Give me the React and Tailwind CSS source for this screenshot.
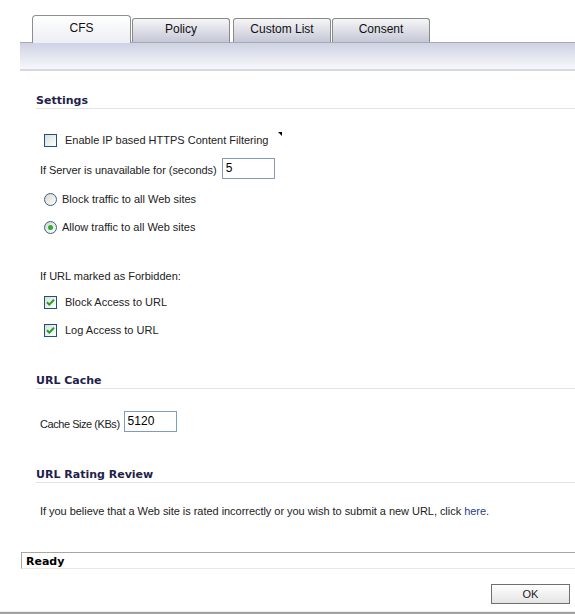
import React from "react";

const body = { fontFamily: '"Liberation Sans", Arial, sans-serif' };
const bold = { fontFamily: '"DejaVu Sans", Verdana, sans-serif' };

function Check({ checked }) {
  return (
    <span className="w-[13px] h-[13px] border border-[#1c5180] bg-gradient-to-br from-[#dcdcd7] to-white flex items-center justify-center shrink-0">
      {checked && (
        <svg width="9" height="9" viewBox="0 0 9 9">
          <path d="M1 4.2 L3.3 6.6 L8 1.8" fill="none" stroke="#21a121" strokeWidth="2" />
        </svg>
      )}
    </span>
  );
}

function Radio({ checked }) {
  return (
    <span className="w-[13px] h-[13px] rounded-full border border-[#3d5f86] bg-gradient-to-br from-[#d6d6d0] to-white flex items-center justify-center shrink-0">
      {checked && <span className="w-[5px] h-[5px] rounded-full bg-[#2fae2f]" />}
    </span>
  );
}

function Heading({ children, mt }) {
  return (
    <div
      className={`h-[15px] leading-[14px] text-[11px] font-bold text-[#1f1f4d] border-b border-[#e3e3e3] ${mt}`}
      style={bold}
    >
      {children}
    </div>
  );
}

function Tab({ label, active }) {
  if (active) {
    return (
      <div className="relative z-10 -mb-px w-[99px] h-[28px] rounded-t-[4px] border border-b-0 border-[#8e8e8e] bg-gradient-to-b from-white to-[#eceef4] flex items-center justify-center text-[12px] text-[#111]">
        <span className="-mt-[2px]">{label}</span>
      </div>
    );
  }
  return (
    <div className="w-[98px] h-[24px] rounded-t-[3px] border border-b-0 border-[#8a8a8a] bg-gradient-to-b from-[#f6f6f6] to-[#c5c7d7] flex items-center justify-center text-[12px] text-[#111]">
      <span className="-mt-[3px]">{label}</span>
    </div>
  );
}

export default function App() {
  return (
    <div className="w-[575px] h-[614px] bg-white text-[#222] overflow-hidden flex flex-col" style={body}>
      <div className="h-[42px] pl-[32px] flex items-end gap-[1px]">
        <Tab label="CFS" active />
        <Tab label="Policy" />
        <div className="w-[1px]" />
        <Tab label="Custom List" />
        <Tab label="Consent" />
      </div>
      <div className="ml-[20px] h-[30px] border-t border-[#a9a9b5] border-b-2 border-b-[#d5d7e3] bg-gradient-to-b from-[#ced2e2] to-[#f8f8fb]" />

      <div className="pl-[36px] flex flex-col text-[11px]">
        <Heading mt="mt-[23px]">Settings</Heading>

        <div className="mt-[21px] h-[20px] pl-[8px] flex items-center">
          <Check />
          <span className="ml-[8px]">Enable IP based HTTPS Content Filtering</span>
          <svg width="4" height="4" viewBox="0 0 4 4" className="ml-[10px] self-start mt-[2px]">
            <polygon points="0,0 4,0 4,4" fill="#000" />
          </svg>
        </div>

        <div className="mt-[8px] h-[21px] pl-[4px] flex items-center">
          <span className="mt-[3px] tracking-[-0.05px]">If Server is unavailable for (seconds)</span>
          <div className="ml-[5px] w-[53px] h-[21px] border border-[#7f9db9] pl-[3px] text-[12px] leading-[19px] text-black">5</div>
        </div>

        <div className="mt-[10px] h-[20px] pl-[8px] flex items-center">
          <Radio />
          <span className="ml-[5px]">Block traffic to all Web sites</span>
        </div>
        <div className="mt-[8px] h-[20px] pl-[8px] flex items-center">
          <Radio checked />
          <span className="ml-[5px]">Allow traffic to all Web sites</span>
        </div>

        <div className="mt-[29px] h-[20px] pl-[4px] flex items-center">If URL marked as Forbidden:</div>
        <div className="mt-[6px] h-[20px] pl-[8px] flex items-center">
          <Check checked />
          <span className="ml-[8px]">Block Access to URL</span>
        </div>
        <div className="mt-[8px] h-[20px] pl-[8px] flex items-center">
          <Check checked />
          <span className="ml-[8px]">Log Access to URL</span>
        </div>

        <Heading mt="mt-[34px]">URL Cache</Heading>
        <div className="mt-[22px] h-[21px] pl-[4px] flex items-center">
          <span className="mt-[5px] tracking-[-0.45px]">Cache Size (KBs)</span>
          <div className="ml-[4px] w-[53px] h-[21px] border border-[#7f9db9] pl-[3px] text-[12px] leading-[19px] text-black">5120</div>
        </div>

        <Heading mt="mt-[36px]">URL Rating Review</Heading>
        <div className="mt-[18px] h-[20px] pl-[4px] flex items-center">
          <span className="tracking-[-0.04px]">
            If you believe that a Web site is rated incorrectly or you wish to submit a new URL, click{" "}
            <span className="text-[#1f3d8f]">here</span>.
          </span>
        </div>
      </div>

      <div className="mt-[31px] ml-[21px] h-[17px] border-t border-l border-[#a8a8a0] border-b border-b-[#e8e8e0] pl-[4px] flex items-center">
        <span className="text-[11px] font-bold text-black leading-none mt-[1px]" style={bold}>Ready</span>
      </div>

      <div className="mt-[15px] flex justify-end pr-[5px]">
        <div className="w-[79px] h-[20px] border border-[#707070] bg-gradient-to-b from-white to-[#e4e4e4] flex items-center justify-center text-[11px] text-[#222]">
          OK
        </div>
      </div>
      <div className="mt-[7px] h-[1px] bg-[#ecece6]" />
      <div className="h-[2px] bg-[#a0a0a0]" />
    </div>
  );
}
